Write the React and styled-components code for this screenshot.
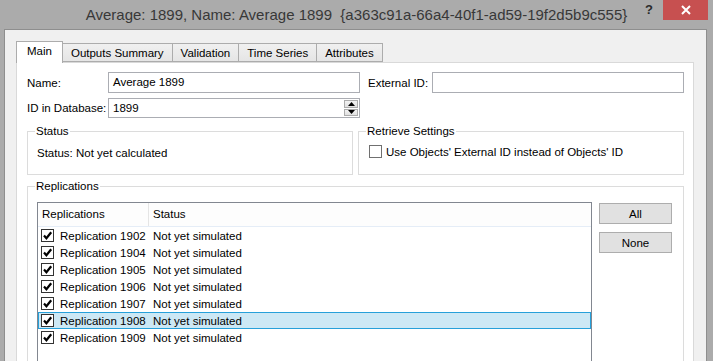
import React from "react";
import styled, { createGlobalStyle } from "styled-components";

const GlobalStyle = createGlobalStyle`
  html, body {
    margin: 0;
    padding: 0;
    background: #ababab;
  }
  * {
    box-sizing: border-box;
  }
`;

const replications = [
  { id: 1902, checked: true },
  { id: 1904, checked: true },
  { id: 1905, checked: true },
  { id: 1906, checked: true },
  { id: 1907, checked: true },
  { id: 1908, checked: true, selected: true },
  { id: 1909, checked: true },
];

const tabs = ["Main", "Outputs Summary", "Validation", "Time Series", "Attributes"];

const App = () => {
  return (
    <Window>
      <GlobalStyle />
      <TitleBar>
        <TitleText>
          Average: 1899, Name: Average 1899&nbsp;&nbsp;{"{a363c91a-66a4-40f1-ad59-19f2d5b9c555}"}
        </TitleText>
        <HelpButton>?</HelpButton>
        <CloseButton>
          <svg width="10" height="10" viewBox="0 0 10 10">
            <path d="M1 1 L9 9 M9 1 L1 9" stroke="#fff" strokeWidth="2" />
          </svg>
        </CloseButton>
      </TitleBar>
      <Client>
        <TabStrip>
          {tabs.map((t, i) => (
            <Tab key={t} active={i === 0}>
              {t}
            </Tab>
          ))}
        </TabStrip>
        <Panel>
          <FieldRow>
            <Label>Name:</Label>
            <TextBox>Average 1899</TextBox>
            <Label narrow>External ID:</Label>
            <TextBox />
          </FieldRow>
          <FieldRow>
            <Label>ID in Database:</Label>
            <SpinBox>
              <SpinValue>1899</SpinValue>
              <SpinButtons>
                <SpinButton>
                  <svg width="7" height="4" viewBox="0 0 7 4">
                    <path d="M0 4 L3.5 0 L7 4 Z" fill="#000" />
                  </svg>
                </SpinButton>
                <SpinButton>
                  <svg width="7" height="4" viewBox="0 0 7 4">
                    <path d="M0 0 L3.5 4 L7 0 Z" fill="#000" />
                  </svg>
                </SpinButton>
              </SpinButtons>
            </SpinBox>
          </FieldRow>
          <GroupRow>
            <Group>
              <Legend>Status</Legend>
              <GroupText>Status: Not yet calculated</GroupText>
            </Group>
            <Group>
              <Legend>Retrieve Settings</Legend>
              <CheckLine>
                <CheckBox />
                <span>Use Objects' External ID instead of Objects' ID</span>
              </CheckLine>
            </Group>
          </GroupRow>
          <ReplicationsGroup>
            <Legend>Replications</Legend>
            <ReplicationsBody>
              <ListView>
                <ListHeader>
                  <HeaderCell width={111}>Replications</HeaderCell>
                  <HeaderCell>Status</HeaderCell>
                </ListHeader>
                {replications.map((r) => (
                  <ListRow key={r.id} selected={r.selected}>
                    <NameCell>
                      <CheckBox checked={r.checked} dark>
                        {r.checked && (
                          <svg width="11" height="11" viewBox="0 0 11 11">
                            <path
                              d="M2 5.6 L4.4 8.3 L9.2 2.2"
                              stroke="#000"
                              strokeWidth="2.2"
                              fill="none"
                            />
                          </svg>
                        )}
                      </CheckBox>
                      <span>Replication {r.id}</span>
                    </NameCell>
                    <StatusCell>Not yet simulated</StatusCell>
                  </ListRow>
                ))}
              </ListView>
              <ButtonColumn>
                <PushButton>All</PushButton>
                <PushButton>None</PushButton>
              </ButtonColumn>
            </ReplicationsBody>
          </ReplicationsGroup>
        </Panel>
      </Client>
    </Window>
  );
};

export default App;

// [Window]--------------------------------------------------------------------------------------------
const Window = styled.div`
  width: 713px;
  height: 361px;
  overflow: hidden;
  background: #ababab;
  font-family: "Liberation Sans", Arial, sans-serif;
  font-size: 11.5px;
  color: #000;
  display: flex;
  flex-direction: column;
`;

const TitleBar = styled.div`
  height: 29px;
  flex: none;
  display: flex;
  align-items: flex-start;
`;

const TitleText = styled.div`
  flex: 1;
  text-align: center;
  font-size: 15px;
  color: #383838;
  line-height: 30px;
  padding-left: 74px;
  white-space: nowrap;
`;

const HelpButton = styled.div`
  width: 20px;
  font-size: 13px;
  font-weight: bold;
  color: #2b2b2b;
  line-height: 20px;
  text-align: center;
  margin-right: 4px;
`;

const CloseButton = styled.div`
  width: 45px;
  height: 20px;
  background: #c75050;
  display: flex;
  align-items: center;
  justify-content: center;
  margin-right: 5px;
`;

// [Client]--------------------------------------------------------------------------------------------
const Client = styled.div`
  flex: 1;
  margin: 0 6px 0 4px;
  background: #f0f0f0;
  border: 1px solid #8e8e8e;
  border-bottom: none;
  padding: 11px 12px 0 11px;
  display: flex;
  flex-direction: column;
`;

const TabStrip = styled.div`
  display: flex;
  align-items: flex-end;
  height: 21px;
  position: relative;
  z-index: 1;
`;

const Tab = styled.div`
  height: ${({ active }) => (active ? "22px" : "19px")};
  margin-bottom: ${({ active }) => (active ? "-1px" : "0")};
  padding: 0 ${({ active }) => (active ? "10px" : "8px")};
  border: 1px solid #acacac;
  border-bottom: ${({ active }) => (active ? "none" : "1px solid #acacac")};
  margin-left: ${({ active }) => (active ? "0" : "-1px")};
  background: ${({ active }) =>
    active ? "#fff" : "linear-gradient(#f0f0f0, #e5e5e5)"};
  display: flex;
  align-items: center;
  padding-top: ${({ active }) => (active ? "0" : "1px")};
  padding-bottom: ${({ active }) => (active ? "3px" : "0")};
  white-space: nowrap;
`;

const Panel = styled.div`
  flex: 1;
  background: #fff;
  border: 1px solid #d9d9d9;
  border-bottom: none;
  padding: 9px 9px 0 10px;
  display: flex;
  flex-direction: column;
`;

const FieldRow = styled.div`
  display: flex;
  align-items: center;
  margin-bottom: 5px;
  &:nth-of-type(2) {
    margin-bottom: 6px;
  }
`;

const Label = styled.div`
  flex: none;
  width: ${({ narrow }) => (narrow ? "72px" : "81px")};
  padding-left: ${({ narrow }) => (narrow ? "8px" : "0")};
  white-space: nowrap;
`;

const TextBox = styled.div`
  flex: none;
  width: 252px;
  height: 21px;
  border: 1px solid #abadb3;
  background: #fff;
  padding: 0 4px;
  line-height: 19px;
`;

const SpinBox = styled(TextBox)`
  height: 20px;
  display: flex;
  padding-right: 1px;
`;

const SpinValue = styled.div`
  flex: 1;
  line-height: 18px;
`;

const SpinButtons = styled.div`
  width: 14px;
  display: flex;
  flex-direction: column;
  padding: 1px 0;
  gap: 1px;
`;

const SpinButton = styled.div`
  flex: 1;
  background: linear-gradient(#f2f2f2, #e0e0e0);
  border: 1px solid #acacac;
  display: flex;
  align-items: center;
  justify-content: center;
`;

// [Groups]--------------------------------------------------------------------------------------------
const GroupRow = styled.div`
  display: flex;
  gap: 5px;
`;

const Group = styled.fieldset`
  margin: 0;
  width: 326px;
  height: 51px;
  border: 1px solid #dcdcdc;
  padding: 4px 10px 0 9px;
  min-width: 0;
`;

const Legend = styled.legend`
  padding: 0 1px;
  margin-left: -2px;
  line-height: 15px;
  color: #000;
`;

const GroupText = styled.div`
  margin-top: 4px;
`;

const CheckLine = styled.div`
  display: flex;
  align-items: center;
  gap: 4px;
  margin-top: 2px;
  margin-left: 1px;
`;

const CheckBox = styled.div`
  width: 13px;
  height: 13px;
  flex: none;
  border: 1px solid ${({ dark }) => (dark ? "#333" : "#707070")};
  background: #fff;
  display: flex;
  align-items: center;
  justify-content: center;
`;

const ReplicationsGroup = styled.fieldset`
  margin: 4px 0 0 0;
  width: 657px;
  flex: 1;
  border: 1px solid #dcdcdc;
  border-bottom: none;
  padding: 8px 10px 0 9px;
  min-width: 0;
`;

const ReplicationsBody = styled.div`
  display: flex;
  gap: 7px;
`;

// [List]--------------------------------------------------------------------------------------------
const ListView = styled.div`
  width: 555px;
  height: 200px;
  border: 1px solid #828790;
  background: #fff;
`;

const ListHeader = styled.div`
  display: flex;
  height: 24px;
  background: #fdfdfd;
  border-bottom: 1px solid #e5edf7;
`;

const HeaderCell = styled.div`
  width: ${({ width }) => (width ? `${width}px` : "auto")};
  flex: ${({ width }) => (width ? "none" : "1")};
  padding-left: 4px;
  line-height: 23px;
  border-right: ${({ width }) => (width ? "1px solid #e5e5e5" : "none")};
`;

const ListRow = styled.div`
  display: flex;
  height: 17px;
  align-items: center;
  background: ${({ selected }) => (selected ? "#cce8f5" : "transparent")};
  border: 1px solid ${({ selected }) => (selected ? "#26a0da" : "transparent")};
  &:first-of-type {
    margin-top: 1px;
  }
`;

const NameCell = styled.div`
  width: 111px;
  display: flex;
  align-items: center;
  gap: 6px;
  padding-left: 2px;
  white-space: nowrap;
`;

const StatusCell = styled.div`
  padding-left: 3px;
  white-space: nowrap;
`;

const ButtonColumn = styled.div`
  display: flex;
  flex-direction: column;
  gap: 8px;
  padding-top: 1px;
`;

const PushButton = styled.div`
  width: 73px;
  height: 21px;
  border: 1px solid #adadad;
  background: #e1e1e1;
  display: flex;
  align-items: center;
  justify-content: center;
`;
